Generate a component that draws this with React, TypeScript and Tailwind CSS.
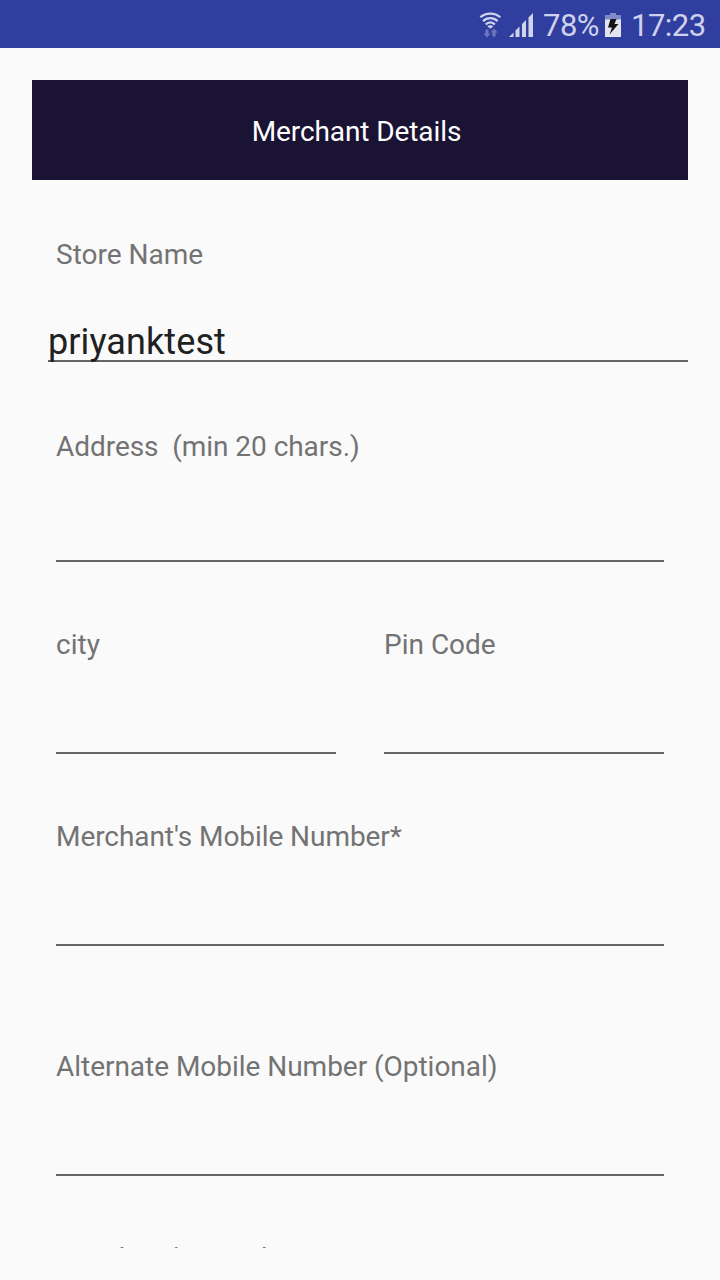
import type { ReactNode } from "react";

function WifiIcon() {
  return (
    <svg width="24" height="26" viewBox="0 0 24 26" fill="none" className="shrink-0">
      <g stroke="#d0d3ec" strokeWidth="2.2">
        <path d="M1.300 5.200C6.800 0.300 15.800 0.300 21.300 5.200" />
        <path d="M4 9.100C8.200 5.200 14.400 5.200 18.600 9.100" />
        <path d="M6.700 12.500C9.400 9.600 13.200 9.600 15.900 12.500" />
      </g>
      <path d="M11.300 16.700L8.300 14.200C9.700 12.800 12.900 12.800 14.300 14.200Z" fill="#d0d3ec" />
      <path d="M6.500 17.500h3v4h2l-3.500 4l-3.500-4h2z" fill="#7079bf" />
      <path d="M13.500 24.500h3v-4h2l-3.500-4l-3.500 4h2z" fill="#7079bf" />
    </svg>
  );
}

function SignalIcon() {
  return (
    <svg width="25" height="25" viewBox="0 0 25 25" fill="#d0d3ec" className="shrink-0">
      <path d="M0 25L4.500 20.500V25Z" />
      <path d="M6.500 18.500L10.500 14.500V25H6.500Z" />
      <path d="M13 12L17 8V25H13Z" />
      <path d="M19.500 5.500L24 1V25H19.500Z" />
    </svg>
  );
}

function BatteryIcon() {
  return (
    <svg width="16" height="24" viewBox="0 0 16 24" className="shrink-0">
      <path d="M5 0H11V2H16V7H0V2H5Z" fill="#8188c8" />
      <path d="M0 6.500H16V24H0Z" fill="#e3e4f2" />
      <path d="M5.500 6H11.500L9.500 11H13.500L4.500 21.500L7 14.500H3Z" fill="#141414" />
    </svg>
  );
}

function Label({ children }: { children: ReactNode }) {
  return <div className="h-[33px] whitespace-pre text-[28px] leading-[33px] text-[#737373]">{children}</div>;
}

function Field({ label, className }: { label: string; className: string }) {
  return (
    <div className={`flex flex-col justify-between border-b-2 border-[#646464] ${className}`}>
      <Label>{label}</Label>
    </div>
  );
}

export default function App() {
  return (
    <div className="flex h-[1280px] w-[720px] flex-col overflow-hidden bg-[#fafafa] font-['Roboto',sans-serif]">
      <header className="flex h-12 shrink-0 items-start bg-[#303f9f] pl-[479px] text-[31px] leading-[36px] tracking-[-0.5px] text-[#cfd2ec]">
        <div className="pt-3">
          <WifiIcon />
        </div>
        <div className="pt-3 pl-1.5">
          <SignalIcon />
        </div>
        <div className="w-[62px] pt-2 pl-[9px]">78%</div>
        <div className="pt-[13px] pl-[9px]">
          <BatteryIcon />
        </div>
        <div className="pt-2 pl-[10px]">17:23</div>
      </header>

      <main className="mx-8 mt-8 h-[1168px] overflow-hidden">
        <h1 className="flex h-[100px] items-center justify-center bg-[#1a1334] pr-[7px] pt-[3px] text-[28px] leading-[33px] tracking-[-0.1px] text-white">
          Merchant Details
        </h1>

        <div className="mt-[58px] pl-6">
          <Label>Store Name</Label>
        </div>
        <div className="ml-4 mt-[49px] flex h-[42px] border-b-2 border-[#646464] text-[36px] leading-[44px] tracking-[0.1px] text-[#212121]">
          priyanktest
        </div>

        <div className="px-6">
          <Field label="Address  (min 20 chars.)" className="mt-[68px] h-[132px] tracking-[-0.05px]" />
          <div className="mt-[66px] grid grid-cols-2 gap-12">
            <Field label="city" className="h-[126px]" />
            <Field label="Pin Code" className="h-[126px]" />
          </div>
          <Field label="Merchant's Mobile Number*" className="mt-[66px] h-[126px] tracking-[-0.06px]" />
          <Field label="Alternate Mobile Number (Optional)" className="mt-[104px] h-[126px] tracking-[-0.03px]" />
          <Field label="Merchant's Email" className="mt-[66px] h-[126px] tracking-[-0.1px]" />
        </div>
      </main>
    </div>
  );
}
